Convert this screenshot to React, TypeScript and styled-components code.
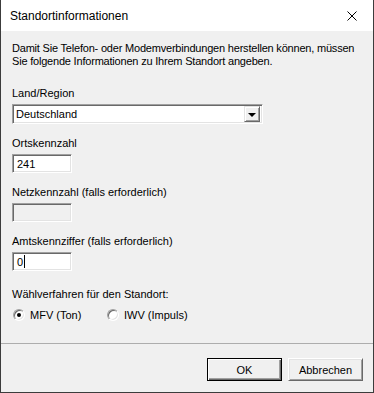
import React from 'react';
import styled, {createGlobalStyle} from 'styled-components';

const GlobalStyle = createGlobalStyle`
    html, body {
        margin: 0;
        padding: 0;
        background: #ffffff;
    }
    * {
        box-sizing: border-box;
    }
`

const Window = styled.div`
    width: 374px;
    height: 393px;
    display: flex;
    flex-direction: column;
    background: #f0f0f0;
    border: 1px solid #3c3c3c;
    border-top: none;
    font-family: "Liberation Sans", Arial, sans-serif;
    font-size: 11px;
    color: #000;
`

const TitleBar = styled.div`
    height: 31px;
    background: #ffffff;
    display: flex;
    align-items: center;
    justify-content: space-between;
    padding-left: 9px;
`

const Title = styled.span`
    font-size: 12px;
    padding-top: 1px;
`

const CloseButton = styled.div`
    width: 46px;
    height: 31px;
    display: flex;
    align-items: center;
    justify-content: center;
    margin-right: -2px;
`

const Body = styled.div`
    flex: 1;
    padding: 11px 11px 0 11px;
    display: flex;
    flex-direction: column;
`

const Intro = styled.p`
    margin: 0;
    line-height: 13px;
    white-space: nowrap;
    letter-spacing: -0.2px;
`

const Field = styled.div<{ $top: number }>`
    margin-top: ${p => p.$top}px;
    display: flex;
    flex-direction: column;
    align-items: flex-start;
`

const Label = styled.div<{ $gap?: number }>`
    line-height: 14px;
    height: 14px;
    margin-bottom: ${p => (p.$gap ?? 4)}px;
`

const Sunken = styled.div`
    border-top: 1px solid #a0a0a0;
    border-left: 1px solid #a0a0a0;
    border-right: 1px solid #ffffff;
    border-bottom: 1px solid #ffffff;
    box-shadow: inset 1px 1px 0 #696969, inset -1px -1px 0 #e3e3e3;
`

const Combo = styled(Sunken)`
    width: 251px;
    height: 20px;
    background: #ffffff;
    display: flex;
    align-items: center;
    justify-content: space-between;
    padding: 2px 2px 2px 3px;
`

const ComboText = styled.span`
    line-height: 14px;
`

const DropButton = styled.div`
    width: 16px;
    height: 16px;
    background: #f0f0f0;
    border-top: 1px solid #e3e3e3;
    border-left: 1px solid #e3e3e3;
    border-right: 1px solid #696969;
    border-bottom: 1px solid #696969;
    box-shadow: inset 1px 1px 0 #ffffff, inset -1px -1px 0 #a0a0a0;
    display: flex;
    align-items: center;
    justify-content: center;
`

const Arrow = styled.div`
    width: 0;
    height: 0;
    border-left: 4px solid transparent;
    border-right: 4px solid transparent;
    border-top: 4px solid #000;
    margin-top: 1px;
`

const TextBox = styled(Sunken)<{ $disabled?: boolean }>`
    width: 60px;
    height: 19px;
    background: ${p => (p.$disabled ? '#f0f0f0' : '#ffffff')};
    display: flex;
    align-items: center;
    padding: 0 4px;
    line-height: 14px;
`

const Caret = styled.span`
    display: inline-block;
    width: 1px;
    height: 13px;
    background: #000;
    margin-left: 1px;
`

const RadioRow = styled.div`
    margin-top: 7px;
    display: flex;
    align-items: center;
    height: 14px;
    padding-left: 1px;
`

const RadioOption = styled.label<{ $width?: number }>`
    display: flex;
    align-items: center;
    width: ${p => (p.$width ? `${p.$width}px` : 'auto')};
    line-height: 14px;
`

const RadioCircle = styled.span<{ $checked?: boolean }>`
    width: 12px;
    height: 12px;
    border-radius: 50%;
    border: 1px solid;
    border-color: #a0a0a0 #ffffff #ffffff #a0a0a0;
    box-shadow: inset 1px 1px 0 #696969, inset -1px -1px 0 #e3e3e3;
    background: #ffffff;
    margin-right: 5px;
    display: flex;
    align-items: center;
    justify-content: center;

    &::after {
        content: '';
        width: 4px;
        height: 4px;
        border-radius: 50%;
        background: ${p => (p.$checked ? '#000' : 'transparent')};
    }
`

const Footer = styled.div`
    border-top: 1px solid #adadad;
    display: flex;
    justify-content: flex-end;
    gap: 6px;
    padding: 14px 10px 11px 0;
`

const Button = styled.button<{ $default?: boolean }>`
    width: 75px;
    height: 23px;
    font-family: "Liberation Sans", Arial, sans-serif;
    font-size: 11px;
    color: #000;
    background: #f0f0f0;
    padding: 0;
    border: 1px solid ${p => (p.$default ? '#000' : '#f0f0f0')};
    border-top-color: ${p => (p.$default ? '#000' : '#ffffff')};
    border-left-color: ${p => (p.$default ? '#000' : '#ffffff')};
    border-right-color: ${p => (p.$default ? '#000' : '#696969')};
    border-bottom-color: ${p => (p.$default ? '#000' : '#696969')};
    box-shadow: ${p => (p.$default
        ? 'inset 1px 1px 0 #ffffff, inset -1px -1px 0 #696969, inset -2px -2px 0 #a0a0a0'
        : 'inset 1px 1px 0 #e3e3e3, inset -1px -1px 0 #a0a0a0')};
`

const CloseIcon = () => (
    <svg width="10" height="10" viewBox="0 0 10 10">
        <path d="M0.5 0.5 L9.5 9.5 M9.5 0.5 L0.5 9.5" stroke="#000" strokeWidth="1" fill="none"/>
    </svg>
)

export default function App() {
    return (
        <>
            <GlobalStyle/>
            <Window>
                <TitleBar>
                    <Title>Standortinformationen</Title>
                    <CloseButton><CloseIcon/></CloseButton>
                </TitleBar>
                <Body>
                    <Intro>
                        Damit Sie Telefon- oder Modemverbindungen herstellen können, müssen<br/>
                        Sie folgende Informationen zu Ihrem Standort angeben.
                    </Intro>

                    <Field $top={18}>
                        <Label>Land/Region</Label>
                        <Combo>
                            <ComboText>Deutschland</ComboText>
                            <DropButton><Arrow/></DropButton>
                        </Combo>
                    </Field>

                    <Field $top={12}>
                        <Label>Ortskennzahl</Label>
                        <TextBox>241</TextBox>
                    </Field>

                    <Field $top={12}>
                        <Label>Netzkennzahl (falls erforderlich)</Label>
                        <TextBox $disabled/>
                    </Field>

                    <Field $top={12}>
                        <Label>Amtskennziffer (falls erforderlich)</Label>
                        <TextBox>0<Caret/></TextBox>
                    </Field>

                    <Field $top={16}>
                        <Label $gap={0}>Wählverfahren für den Standort:</Label>
                    </Field>
                    <RadioRow>
                        <RadioOption $width={94}>
                            <RadioCircle $checked/>
                            MFV (Ton)
                        </RadioOption>
                        <RadioOption>
                            <RadioCircle/>
                            IWV (Impuls)
                        </RadioOption>
                    </RadioRow>
                </Body>
                <Footer>
                    <Button $default>OK</Button>
                    <Button>Abbrechen</Button>
                </Footer>
            </Window>
        </>
    );
}
